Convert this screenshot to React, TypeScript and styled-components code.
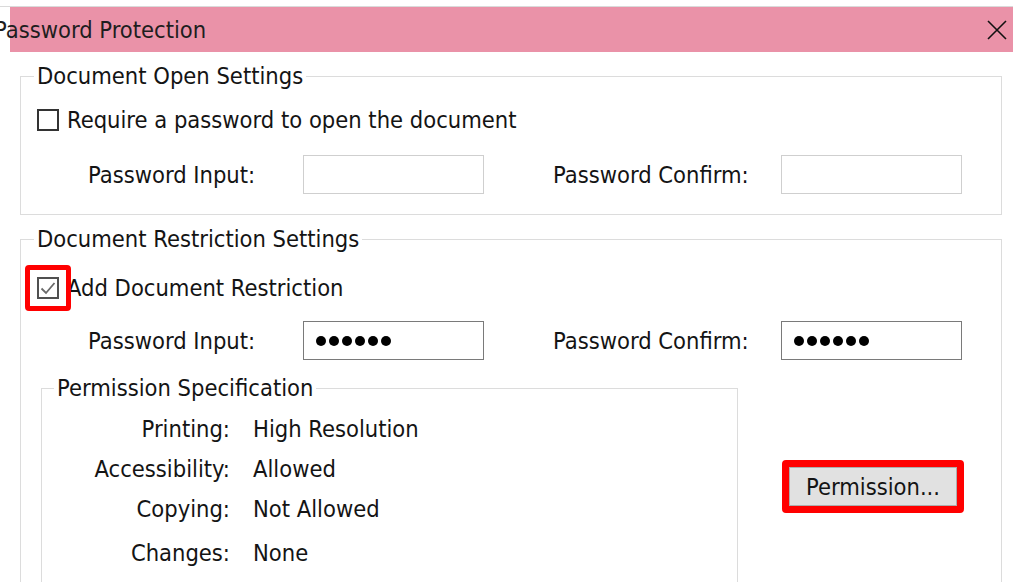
import styled, { createGlobalStyle } from 'styled-components'


const GlobalStyle = createGlobalStyle`
  html, body {
    margin: 0;
    padding: 0;
    background: #FFF;
  }

  body {
    font-family: "DejaVu Sans Condensed", "DejaVu Sans", Tahoma, sans-serif;
    font-size: 23.5px;
    color: #141414;
  }
`

const Dialog = styled.div`
  width: 1013px;
  height: 582px;
  overflow: hidden;
  background: #FFF;
`

const TopEdge = styled.div`
  height: 6px;
  border-bottom: 1px solid #DADADA;
`

const TitleBar = styled.div`
  height: 45px;
  margin-left: 10px;
  padding-right: 6px;

  background: #EA92A8;

  display: flex;
  align-items: center;
  justify-content: space-between;
`

const Title = styled.div`
  margin-left: -16px;
  color: #1E1E1E;
`

const CloseButton = styled.button`
  width: 20px;
  height: 20px;
  padding: 0;
  border: none;
  background: #0000;
  display: flex;
`

const Body = styled.div`
  padding: 10px 11px 0 20px;
`

const Group = styled.fieldset<{ $inner?: boolean; $open?: boolean }>`
  margin: 0 0 ${p => p.$inner ? 0 : 10}px;
  padding: 0 16px ${p => p.$open ? 60 : 0}px;
  min-width: 0;
  border: 1px solid #DCDCDC;
  ${p => p.$inner && `
    width: 697px;
    box-sizing: border-box;
    padding-left: 0;
    padding-right: 0;
  `}
`

const Legend = styled.legend<{ $inner?: boolean }>`
  padding: 0 3px;
  margin-left: ${p => p.$inner ? 12 : -3}px;
  line-height: 28px;
`

const CheckRow = styled.label<{ $top: number }>`
  height: 30px;
  margin-top: ${p => p.$top}px;
  display: flex;
  align-items: center;
  gap: 8px;
`

const Box = styled.span<{ $checked?: boolean }>`
  width: 22px;
  height: 22px;
  box-sizing: border-box;
  border: 2px solid ${p => p.$checked ? '#505050' : '#333'};
  display: flex;
  align-items: center;
  justify-content: center;
  flex: none;
`

// red annotation frame drawn over a control
const Marked = styled.span<{ $inset: number; $width: number; $top?: number; $left?: number }>`
  position: relative;
  display: inline-flex;
  flex: none;
  margin: ${p => p.$top ?? 0}px 0 0 ${p => p.$left ?? 0}px;

  &::after {
    content: '';
    position: absolute;
    inset: -${p => p.$inset}px;
    border: ${p => p.$width}px solid #F00;
    border-radius: 4px;
    pointer-events: none;
  }
`

const FieldRow = styled.div<{ $top: number; $bottom?: number }>`
  height: 39px;
  margin: ${p => p.$top}px 0 ${p => p.$bottom ?? 0}px 51px;
  display: grid;
  grid-template-columns: 215px 181px 69px 228px 181px;
  align-items: center;
`

const Input = styled.div<{ $filled?: boolean }>`
  height: 39px;
  box-sizing: border-box;
  border: 1px solid ${p => p.$filled ? '#7A7A7A' : '#CFCFCF'};
  background: #FFF;
  padding-left: 12px;
  display: flex;
  align-items: center;
  gap: 3px;
`

const Dot = styled.span`
  width: 10px;
  height: 10px;
  border-radius: 50%;
  background: #000;
`

const PermissionArea = styled.div`
  margin: 14px 0 0 4px;
  display: flex;
  align-items: flex-start;
`

const PermissionGrid = styled.div`
  margin-top: 7px;
  display: grid;
  grid-template-columns: 188px auto;
  column-gap: 23px;
  grid-auto-rows: 40px;
  align-items: center;
`

const PermCell = styled.div<{ $label?: boolean; $last?: boolean }>`
  ${p => p.$label && 'justify-self: end;'}
  ${p => p.$last && 'padding-top: 8px;'}
`

const PermissionButton = styled.button`
  width: 168px;
  height: 39px;
  border: 1px solid #ADADAD;
  background: #E1E1E1;
  font: inherit;
  color: #141414;
  padding: 0;
`


const DOTS = [0, 1, 2, 3, 4, 5]

const PERMISSIONS = [
  ['Printing:', 'High Resolution'],
  ['Accessibility:', 'Allowed'],
  ['Copying:', 'Not Allowed'],
  ['Changes:', 'None'],
]


function Masked() {
  return (
    <Input $filled>
      {DOTS.map(i => <Dot key={i} />)}
    </Input>
  )
}

export default function App() {
  return (
    <Dialog>
      <GlobalStyle />
      <TopEdge />

      <TitleBar>
        <Title>Password Protection</Title>
        <CloseButton>
          <svg width="20" height="20" viewBox="0 0 20 20">
            <path d="M1 1 L19 19 M19 1 L1 19" stroke="#111" strokeWidth="1.6" />
          </svg>
        </CloseButton>
      </TitleBar>

      <Body>
        <Group>
          <Legend>Document Open Settings</Legend>
          <CheckRow $top={15}>
            <Box />
            Require a password to open the document
          </CheckRow>
          <FieldRow $top={20} $bottom={20}>
            <span>Password Input:</span>
            <Input />
            <span />
            <span>Password Confirm:</span>
            <Input />
          </FieldRow>
        </Group>

        <Group $open>
          <Legend>Document Restriction Settings</Legend>
          <CheckRow $top={20}>
            <Marked $inset={12} $width={5}>
              <Box $checked>
                <svg width="16" height="14" viewBox="0 0 16 14">
                  <path d="M1.5 7.5 L6 12 L14.5 2" fill="none" stroke="#6A6A6A" strokeWidth="1.8" />
                </svg>
              </Box>
            </Marked>
            Add Document Restriction
          </CheckRow>
          <FieldRow $top={18}>
            <span>Password Input:</span>
            <Masked />
            <span />
            <span>Password Confirm:</span>
            <Masked />
          </FieldRow>

          <PermissionArea>
            <Group $inner $open>
              <Legend $inner>Permission Specification</Legend>
              <PermissionGrid>
                {PERMISSIONS.map(([label, value], i) => [
                  <PermCell key={label} $label $last={i === 3}>{label}</PermCell>,
                  <PermCell key={value} $last={i === 3}>{value}</PermCell>,
                ])}
              </PermissionGrid>
            </Group>
            <Marked $inset={7} $width={7} $top={93} $left={51}>
              <PermissionButton>Permission...</PermissionButton>
            </Marked>
          </PermissionArea>
        </Group>
      </Body>
    </Dialog>
  )
}
